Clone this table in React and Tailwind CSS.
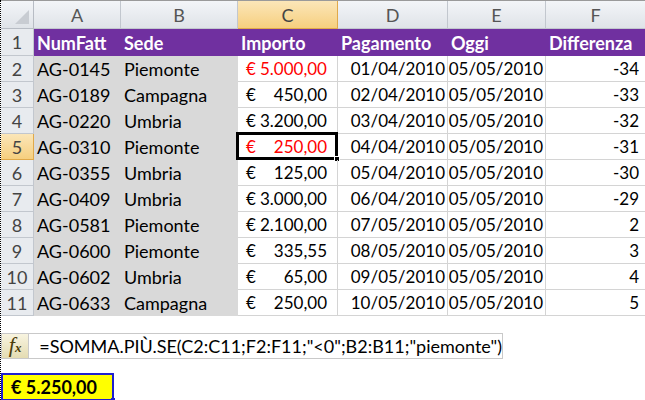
import React from 'react';

const rows = [
  ['AG-0145', 'Piemonte', '5.000,00', '01/04/2010', '-34', true],
  ['AG-0189', 'Campagna', '450,00', '02/04/2010', '-33'],
  ['AG-0220', 'Umbria', '3.200,00', '03/04/2010', '-32'],
  ['AG-0310', 'Piemonte', '250,00', '04/04/2010', '-31', true],
  ['AG-0355', 'Umbria', '125,00', '05/04/2010', '-30'],
  ['AG-0409', 'Umbria', '3.000,00', '06/04/2010', '-29'],
  ['AG-0581', 'Piemonte', '2.100,00', '07/05/2010', '2'],
  ['AG-0600', 'Piemonte', '335,55', '08/05/2010', '3'],
  ['AG-0602', 'Umbria', '65,00', '09/05/2010', '4'],
  ['AG-0633', 'Campagna', '250,00', '10/05/2010', '5'],
];

const cols = ['A', 'B', 'C', 'D', 'E', 'F'];

export default function App() {
  return (
    <div className="w-[645px] h-[400px] bg-white overflow-hidden border-l border-dotted border-black font-['Lato',sans-serif] text-[17px] leading-none text-black">
      {/* Sheet grid */}
      <div className="grid grid-cols-[33px_87px_117px_100px_110px_98px_100px] border-t border-[#9a9a9a]">
        {/* column letters */}
        <div className="h-[28px] bg-gradient-to-b from-[#f3f5f8] to-[#dfe3e8] border-r border-b border-[#b7bcc4] relative">
          <div className="absolute right-[4px] bottom-[4px] w-0 h-0 border-l-[14px] border-l-transparent border-b-[14px] border-b-[#c8ccd2]" />
        </div>
        {cols.map((c) => (
          <div
            key={c}
            className={
              c === 'C'
                ? 'h-[28px] flex items-center justify-center bg-gradient-to-b from-[#fbe6b8] to-[#f6cf7e] border-r border-b border-[#e0a94a] text-[#444] text-[18px]'
                : 'h-[28px] flex items-center justify-center bg-gradient-to-b from-[#f3f5f8] to-[#dfe3e8] border-r border-b border-[#c2c7ce] text-[#555] text-[18px]'
            }
          >
            {c}
          </div>
        ))}

        {/* row 1 header */}
        <div className="h-[27px] flex items-center justify-center bg-[#e8ebef] border-r border-b border-[#c2c7ce] text-[#444] text-[18px]">1</div>
        <div className="h-[27px] bg-[#7030a0] text-white font-bold text-[18px] flex items-center pl-[3px]">NumFatt</div>
        <div className="h-[27px] bg-[#7030a0] text-white font-bold text-[18px] flex items-center pl-[3px]">Sede</div>
        <div className="h-[27px] bg-[#7030a0] text-white font-bold text-[18px] flex items-center pl-[3px]">Importo</div>
        <div className="h-[27px] bg-[#7030a0] text-white font-bold text-[18px] flex items-center pl-[3px]">Pagamento</div>
        <div className="h-[27px] bg-[#7030a0] text-white font-bold text-[18px] flex items-center pl-[3px]">Oggi</div>
        <div className="h-[27px] bg-[#7030a0] text-white font-bold text-[18px] flex items-center pl-[3px] whitespace-nowrap">Differenza</div>

        {rows.map((r, i) => {
          const n = i + 2;
          const sel = n === 5;
          return (
            <React.Fragment key={n}>
              <div
                className={
                  sel
                    ? 'h-[26px] flex items-center justify-center bg-gradient-to-b from-[#fbe6b8] to-[#f6cf7e] border-r border-b border-[#e0a94a] text-[#444] text-[18px]'
                    : 'h-[26px] flex items-center justify-center bg-[#e8ebef] border-r border-b border-[#c2c7ce] text-[#444] text-[18px]'
                }
              >
                {n}
              </div>
              <div className="h-[26px] bg-[#d9d9d9] flex items-center pl-[3px] text-[18px]">{r[0]}</div>
              <div className="h-[26px] bg-[#d9d9d9] flex items-center pl-[3px] text-[18px]">{r[1]}</div>
              <div className="h-[26px] relative border-r border-b border-[#d4d4d4] flex items-center justify-between pl-[8px] pr-[10px]">
                <span className={r[5] ? 'text-[#ff0000]' : ''}>€</span>
                <span className={r[5] ? 'text-[#ff0000]' : ''}>{r[2]}</span>
                {sel && (
                  <div className="absolute left-[-2px] top-[-2px] right-[-1px] bottom-[-1px] border-[3px] border-black">
                    <div className="absolute right-[-5px] bottom-[-5px] w-[6px] h-[6px] bg-black border border-white" />
                  </div>
                )}
              </div>
              <div className="h-[26px] border-r border-b border-[#d4d4d4] flex items-center justify-end pr-[2px]">{r[3]}</div>
              <div className="h-[26px] border-r border-b border-[#d4d4d4] flex items-center justify-end pr-[2px]">05/05/2010</div>
              <div className="h-[26px] border-b border-[#d4d4d4] flex items-center justify-end pr-[7px]">{r[4]}</div>
            </React.Fragment>
          );
        })}
      </div>

      {/* Formula bar */}
      <div className="mt-[17px] flex h-[26px] w-[502px]">
        <div className="w-[30px] h-full bg-gradient-to-b from-[#f8f4e0] to-[#e4dcb2] border border-[#c9c9c9] flex items-center justify-center font-['Liberation_Serif',serif] italic text-[#4a3c08] text-[22px] pb-[2px]">
          <span>f<span className="text-[13px] font-bold">x</span></span>
        </div>
        <div className="flex-1 h-full border border-l-0 border-[#c9c9c9] flex items-center pl-[10px] whitespace-nowrap text-[18px]">
          =SOMMA.PIÙ.SE(C2:C11;F2:F11;"&lt;0";B2:B11;"piemonte")
        </div>
      </div>

      {/* Result cell */}
      <div className="mt-[14px] relative w-[113px] h-[28px] bg-[#ffff00] border-2 border-[#1f1fd0] flex items-center pl-[8px] font-bold text-[18px]">
        € 5.250,00
        <div className="absolute right-[-3px] bottom-[-3px] w-[4px] h-[4px] bg-[#1f1fd0]" />
      </div>
    </div>
  );
}
